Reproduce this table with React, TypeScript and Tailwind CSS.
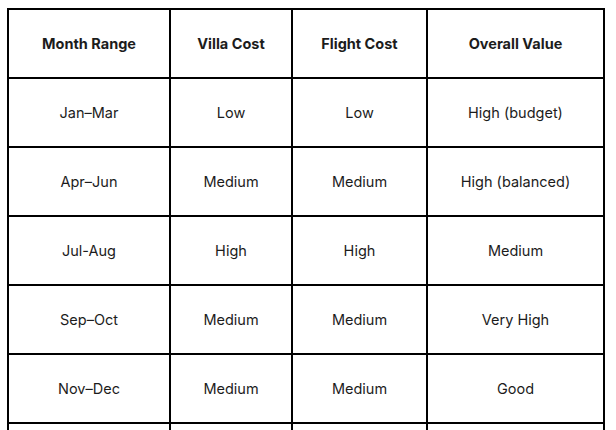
const headers = ['Month Range', 'Villa Cost', 'Flight Cost', 'Overall Value']

const rows = [
  ['Jan–Mar', 'Low', 'Low', 'High (budget)'],
  ['Apr–Jun', 'Medium', 'Medium', 'High (balanced)'],
  ['Jul-Aug', 'High', 'High', 'Medium'],
  ['Sep–Oct', 'Medium', 'Medium', 'Very High'],
  ['Nov–Dec', 'Medium', 'Medium', 'Good'],
]

export default function App() {
  return (
    <div className="h-[430px] overflow-hidden bg-white pl-[7px] pt-[8px] text-[#1c1c1c]" style={{ fontFamily: 'Inter, "Noto Sans", sans-serif' }}>
      <div className="grid w-[598px] grid-cols-[160px_120px_133px_175px] auto-rows-[67px] gap-[2px] bg-black p-[2px] pb-0">
        {headers.map(h => (
          <div key={h} className="flex items-center justify-center bg-white text-[14.5px] font-bold">{h}</div>
        ))}
        {rows.map((r, i) => r.map((c, j) => (
          <div key={i + '-' + j} className="flex items-center justify-center bg-white text-[14.5px]">{c}</div>
        )))}
        {headers.map(h => (
          <div key={'pad-' + h} className="bg-white" />
        ))}
      </div>
    </div>
  )
}
